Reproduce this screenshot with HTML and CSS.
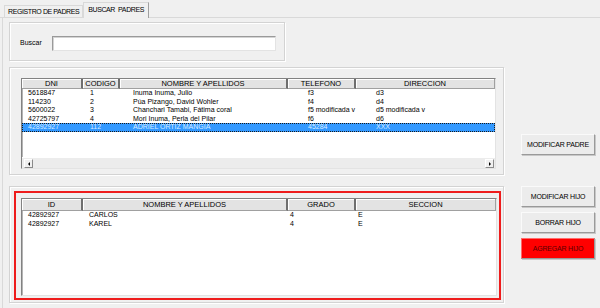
FILE: index.html
```html
<!DOCTYPE html>
<html lang="es">
<head>
    <meta charset="UTF-8">
    <title>Buscar Padres</title>
    <link rel="stylesheet" href="styles.css">
</head>
<body>
    <div class="tabs">
        <div class="tab">REGISTRO DE PADRES</div>
        <div class="tab active">BUSCAR&nbsp; PADRES</div>
    </div>
    <div class="page">
        <div class="frame search">
            <label for="buscar">Buscar</label>
            <input type="text" id="buscar">
        </div>

        <div class="row parents-row">
            <div class="frame parents">
                <div class="list parents-list">
                    <div class="list-head">
                        <div class="hcell" style="width:61px">DNI</div>
                        <div class="hcell" style="width:37px">CODIGO</div>
                        <div class="hcell" style="width:168px">NOMBRE Y APELLIDOS</div>
                        <div class="hcell" style="width:68px">TELEFONO</div>
                        <div class="hcell last">DIRECCION</div>
                    </div>
                    <div class="list-body">
                        <div class="prow"><span>5618847</span><span>1</span><span>Inuma Inuma, Julio</span><span>f3</span><span>d3</span></div>
                        <div class="prow"><span>114230</span><span>2</span><span>Púa Pizango, David Wohler</span><span>f4</span><span>d4</span></div>
                        <div class="prow"><span>5600022</span><span>3</span><span>Chanchari Tamabi, Fátima coral</span><span>f5 modificada v</span><span>d5 modificada v</span></div>
                        <div class="prow"><span>42725797</span><span>4</span><span>Mori Inuma, Perla del Pilar</span><span>f6</span><span>d6</span></div>
                        <div class="prow selected"><span>42892927</span><span>112</span><span>ADRIEL ORTIZ MANGIA</span><span>45284</span><span>XXX</span></div>
                    </div>
                    <div class="hscroll">
                        <div class="arrow left"></div>
                        <div class="arrow right"></div>
                    </div>
                </div>
            </div>
            <div class="side side-parents">
                <button>MODIFICAR PADRE</button>
            </div>
        </div>

        <div class="row children-row">
            <div class="frame children">
                <div class="red-box">
                    <div class="list children-list">
                        <div class="list-head tall">
                            <div class="hcell" style="width:61px">ID</div>
                            <div class="hcell" style="width:205px">NOMBRE Y APELLIDOS</div>
                            <div class="hcell" style="width:68px">GRADO</div>
                            <div class="hcell last">SECCION</div>
                        </div>
                        <div class="list-body">
                            <div class="crow"><span>42892927</span><span>CARLOS</span><span>4</span><span>E</span></div>
                            <div class="crow"><span>42892927</span><span>KAREL</span><span>4</span><span>E</span></div>
                        </div>
                    </div>
                </div>
            </div>
            <div class="side side-children">
                <button>MODIFICAR HIJO</button>
                <button>BORRAR HIJO</button>
                <button class="red">AGREGAR HIJO</button>
            </div>
        </div>
    </div>
</body>
</html>
```

FILE: styles.css
```css
* {
    box-sizing: border-box;
}
body {
    margin: 0;
    background-color: #f0f0f0;
    font-family: "Liberation Sans", Arial, sans-serif;
    font-size: 7px;
    color: #000;
    width: 600px;
    height: 308px;
    overflow: hidden;
}
.tabs {
    display: flex;
    align-items: flex-end;
    height: 18px;
    padding-left: 4px;
    border-bottom: 1px solid #d9d9d9;
}
.tab {
    height: 12px;
    padding: 0 3px;
    line-height: 11px;
    letter-spacing: -0.4px;
    border: 1px solid #d9d9d9;
    border-bottom: none;
    background-color: #f0f0f0;
}
.tab.active {
    height: 16px;
    margin-bottom: -1px;
    padding: 0 4px 0 4px;
    line-height: 13px;
    border-right: 1px solid #a0a0a0;
}
.page {
    margin-left: 2px;
    height: 290px;
    border-left: 1px solid #d9d9d9;
    padding: 4px 0 0 6px;
}
.frame {
    border: 1px solid #d3d3d3;
    box-shadow: inset 1px 1px 0 #fff, 1px 1px 0 #fff;
}
.search {
    width: 276px;
    height: 39px;
    display: flex;
    align-items: flex-start;
    padding: 13px 0 0 10px;
}
.search label {
    width: 32px;
    line-height: 14px;
}
.search input {
    width: 224px;
    height: 15px;
    background: #fff;
    border: 1px solid;
    border-color: #9a9a9a #e3e3e3 #e3e3e3 #9a9a9a;
    box-shadow: inset 1px 1px 0 #d4d4d4;
    outline: none;
}
.row {
    display: flex;
}
.parents-row {
    margin-top: 6px;
}
.children-row {
    margin-top: 11px;
}
.parents {
    width: 495px;
    height: 108px;
    padding: 10px 0 0 11px;
}
.children {
    width: 495px;
    height: 117px;
    padding: 4px 0 0 4px;
}
.red-box {
    width: 487px;
    height: 109px;
    border: 2px solid #ee1c1c;
    padding: 5px 0 0 5px;
}
.list {
    background-color: #fff;
    border: 1px solid;
    border-color: #828282 #e3e3e3 #e3e3e3 #828282;
    box-shadow: inset 1px 1px 0 #b4b4b4;
    display: flex;
    flex-direction: column;
}
.parents-list {
    width: 475px;
    height: 91px;
}
.children-list {
    width: 476px;
    height: 98px;
}
.list-head {
    display: flex;
    height: 10px;
    font-size: 7.5px;
}
.list-head.tall {
    height: 12px;
}
.hcell {
    flex: none;
    text-align: center;
    background-color: #e3e3e3;
    border-right: 2px solid #6e6e6e;
    border-bottom: 1px solid #a0a0a0;
    box-shadow: inset 1px 1px 0 #fff;
    line-height: 9px;
}
.list-head.tall .hcell {
    line-height: 11px;
}
.hcell.last {
    flex: 1;
    border-right: 1px solid #a0a0a0;
}
.list-body {
    flex: 1;
}
.prow, .crow {
    display: grid;
    height: 8.6px;
    line-height: 8.6px;
    padding-left: 6px;
    white-space: nowrap;
}
.prow {
    grid-template-columns: 62px 43px 175px 68px 1fr;
}
.crow {
    grid-template-columns: 61px 201px 68px 1fr;
}
.prow.selected {
    background-color: #3399ff;
    color: #d8ebff;
    outline: 1px dotted #1a1a1a;
    outline-offset: -1px;
}
.hscroll {
    height: 11px;
    display: flex;
    justify-content: space-between;
    padding: 1px 1px 1px 2px;
    background-color: #ececec;
    border-top: 1px solid #fff;
}
.arrow {
    width: 9px;
    height: 9px;
    border: 1px solid;
    border-color: #fff #8a8a8a #8a8a8a #fff;
    background-color: #f0f0f0;
    display: flex;
    align-items: center;
    justify-content: center;
}
.arrow::after {
    content: "";
    border-top: 2px solid transparent;
    border-bottom: 2px solid transparent;
}
.arrow.left::after {
    border-right: 2px solid #000;
}
.arrow.right::after {
    border-left: 2px solid #000;
}
.side {
    margin-left: 17px;
    width: 74px;
    display: flex;
    flex-direction: column;
    gap: 5px;
}
.side-parents {
    padding-top: 67px;
}
button {
    width: 74px;
    height: 21px;
    padding: 0;
    font-family: "Liberation Sans", Arial, sans-serif;
    font-size: 7px;
    letter-spacing: -0.2px;
    color: #000;
    background-color: #ececec;
    border: 1px solid;
    border-color: #fafafa #9a9a9a #9a9a9a #fafafa;
    box-shadow: 1px 1px 0 #c8c8c8;
}
button.red {
    background-color: #ff0000;
    color: #5a0000;
    border-color: #ff6a6a #9a9a9a #9a9a9a #ff6a6a;
}
```
